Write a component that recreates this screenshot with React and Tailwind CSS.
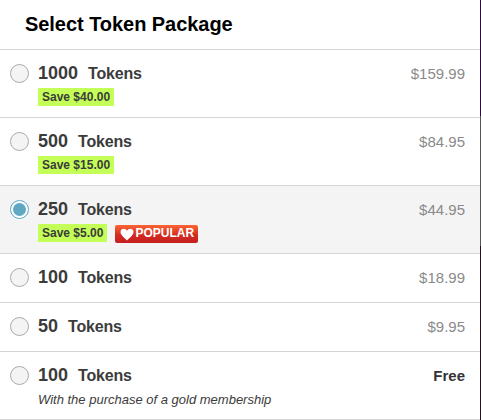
import React from 'react';

const packages = [
  { id: 1, amount: 1000, price: '$159.99', save: 'Save $40.00' },
  { id: 2, amount: 500, price: '$84.95', save: 'Save $15.00' },
  { id: 3, amount: 250, price: '$44.95', save: 'Save $5.00', popular: true },
  { id: 4, amount: 100, price: '$18.99' },
  { id: 5, amount: 50, price: '$9.95' },
  { id: 6, amount: 100, price: 'Free', free: true, note: 'With the purchase of a gold membership' },
];

function Radio({ checked }) {
  return (
    <span
      className={`mt-[14px] flex h-[19px] w-[19px] shrink-0 items-center justify-center rounded-full border ${
        checked ? 'border-[#5fa8c4] bg-white' : 'border-[#aaaaaa] bg-[#f4f4f4]'
      }`}
    >
      {checked && <span className="h-[13px] w-[13px] rounded-full bg-[#5fa8c4]" />}
    </span>
  );
}

function PopularBadge() {
  return (
    <span className="mt-px ml-2 flex h-[18px] w-[83px] items-center rounded-[2px] bg-gradient-to-b from-[#fb6434] via-[#d42a22] via-55% to-[#c41f20] pl-[5px] text-white">
      <svg className="mt-px h-[13px] w-[14px] shrink-0" viewBox="0 0 14 13" fill="currentColor">
        <path d="M7 12.6C5.8 10.8.5 7.6.5 4.1.5 1.9 2 .7 3.8.7 5.2.7 6.4 1.5 7 2.7 7.6 1.5 8.8.7 10.2.7 12 .7 13.5 1.9 13.5 4.1 13.5 7.6 8.2 10.8 7 12.6Z" />
      </svg>
      <span className="-mt-[2px] ml-px text-[12px] leading-[16px] font-bold">POPULAR</span>
    </span>
  );
}

function PackageRow({ item, checked, onSelect }) {
  return (
    <li
      onClick={onSelect}
      className={`flex cursor-pointer border-b border-[#d5d5d5] pr-[15px] pl-[10px] ${
        item.save || item.note ? 'h-[68px]' : 'h-[49px]'
      } ${checked ? 'bg-[#f4f4f4]' : 'bg-white'}`}
    >
      <Radio checked={checked} />
      <div className="ml-[9px] flex-1 pt-[13px]">
        <div className="flex h-[20px] items-baseline font-bold whitespace-nowrap text-[#3b3b3b]">
          <span className="text-[18px] leading-[20px]">{item.amount}</span>
          <span className="ml-[10px] text-[16px] leading-[20px] tracking-[-0.2px]">Tokens</span>
        </div>
        {item.save && (
          <div className="mt-[5px] flex">
            <span className="h-[18px] bg-[#c3ff57] px-1 text-[12px] leading-[18px] font-bold">{item.save}</span>
            {item.popular && <PopularBadge />}
          </div>
        )}
        {item.note && <p className="mt-[6px] text-[13px] leading-[18px] whitespace-nowrap italic">{item.note}</p>}
      </div>
      <span
        className={`pt-[14px] leading-[20px] ${
          item.free ? 'text-[15px] font-bold text-[#333333]' : 'text-[15px] text-[#8a8a8a]'
        }`}
      >
        {item.price}
      </span>
    </li>
  );
}

export default function App() {
  const [selected, setSelected] = React.useState(3);

  return (
    <div className="flex h-[420px] w-[481px] overflow-hidden bg-white font-['Liberation_Sans',Arial,sans-serif] text-[#3b3b3b]">
      <div className="w-[480px] shrink-0">
        <h1 className="h-[50px] border-b border-[#d5d5d5] pl-[25px] text-[20px] leading-[48px] font-bold tracking-[-0.05px] text-black">
          Select Token Package
        </h1>
        <ul>
          {packages.map((item) => (
            <PackageRow
              key={item.id}
              item={item}
              checked={item.id === selected}
              onSelect={() => setSelected(item.id)}
            />
          ))}
        </ul>
      </div>
      {/* sliver of the page behind the panel */}
      <div className="flex w-px flex-col">
        <div className="h-[116px] bg-[#2d0b3c]" />
        <div className="h-[130px] bg-[#555555]" />
        <div className="flex-1 bg-[#24121c]" />
      </div>
    </div>
  );
}
